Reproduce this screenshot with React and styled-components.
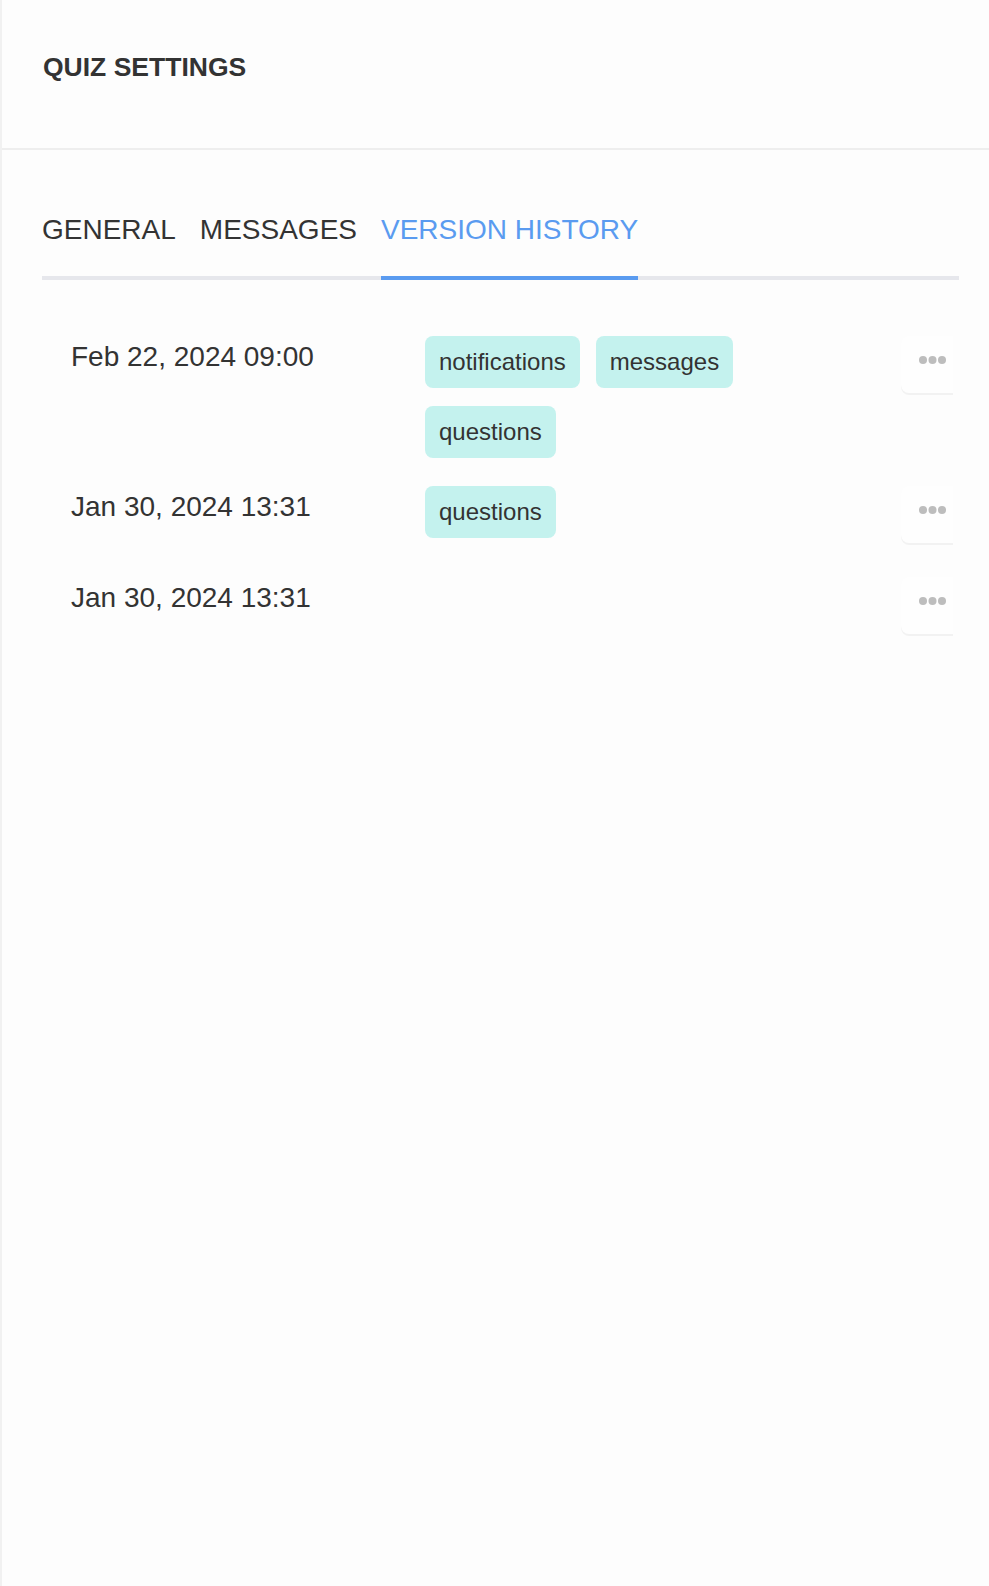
import React from 'react';
import styled, { createGlobalStyle } from 'styled-components';

const GlobalStyle = createGlobalStyle`
  html, body {
    margin: 0;
    padding: 0;
    background: #fdfdfd;
  }
  * {
    box-sizing: border-box;
  }
`;

const Page = styled.div`
  min-height: 1586px;
  border-left: 2px solid #f1f1f1;
  background: #fdfdfd;
  font-family: "Liberation Sans", Arial, sans-serif;
  color: #333;
`;

const Header = styled.div`
  height: 150px;
  padding: 52px 0 0 41px;
  border-bottom: 2px solid #eeeeee;
`;

const Title = styled.h1`
  margin: 0;
  font-size: 26.5px;
  line-height: 30px;
  font-weight: 700;
  color: #333;
`;

const Body = styled.div`
  padding: 59px 30px 0 40px;
`;

const TabBar = styled.div`
  display: flex;
  gap: 24px;
  border-bottom: 4px solid #e6e7ec;
`;

const Tab = styled.div`
  font-size: 28px;
  line-height: 42px;
  padding-bottom: 25px;
  margin-bottom: -4px;
  border-bottom: 4px solid ${({ $active }) => ($active ? '#5a9bf0' : 'transparent')};
  color: ${({ $active }) => ($active ? '#5a9bf0' : '#333')};
  cursor: pointer;
`;

const List = styled.div`
  display: flex;
  flex-direction: column;
  gap: 28px;
  padding: 56px 6px 0 29px;
`;

const Row = styled.div`
  display: flex;
  align-items: flex-start;
  min-height: 63px;
`;

const DateCell = styled.div`
  width: 354px;
  flex-shrink: 0;
  font-size: 28px;
  line-height: 42px;
  color: #333;
`;

const Tags = styled.div`
  width: 360px;
  display: flex;
  flex-wrap: wrap;
  gap: 18px 16px;
`;

const Tag = styled.span`
  display: inline-block;
  padding: 10px 14px;
  font-size: 24px;
  line-height: 32px;
  background: #c4f2ee;
  color: #333;
  border-radius: 8px;
`;

const ActionClip = styled.div`
  margin-left: auto;
  width: 52px;
  overflow: hidden;
  padding-bottom: 3px;
`;

const MoreButton = styled.button`
  width: 62px;
  height: 57px;
  padding: 20px 0 0;
  display: flex;
  justify-content: center;
  align-items: flex-start;
  background: #fefefe;
  border: none;
  border-radius: 8px;
  box-shadow: 0 2px 0 rgba(0, 0, 0, 0.045);
  cursor: pointer;
`;

const Dots = () => (
  <svg width="27" height="8" viewBox="0 0 27 8">
    <circle cx="4" cy="4" r="4" fill="#bdbdbd" />
    <circle cx="13.5" cy="4" r="4" fill="#bdbdbd" />
    <circle cx="23" cy="4" r="4" fill="#bdbdbd" />
  </svg>
);

const versions = [
  { date: 'Feb 22, 2024 09:00', tags: ['notifications', 'messages', 'questions'] },
  { date: 'Jan 30, 2024 13:31', tags: ['questions'] },
  { date: 'Jan 30, 2024 13:31', tags: [] },
];

const App = () => {
  return (
    <Page>
      <GlobalStyle />
      <Header>
        <Title>QUIZ SETTINGS</Title>
      </Header>
      <Body>
        <TabBar>
          <Tab>GENERAL</Tab>
          <Tab>MESSAGES</Tab>
          <Tab $active>VERSION HISTORY</Tab>
        </TabBar>
        <List>
          {versions.map((v, i) => (
            <Row key={i}>
              <DateCell>{v.date}</DateCell>
              <Tags>
                {v.tags.map((t) => (
                  <Tag key={t}>{t}</Tag>
                ))}
              </Tags>
              <ActionClip>
                <MoreButton aria-label="More">
                  <Dots />
                </MoreButton>
              </ActionClip>
            </Row>
          ))}
        </List>
      </Body>
    </Page>
  );
};

export default App;
